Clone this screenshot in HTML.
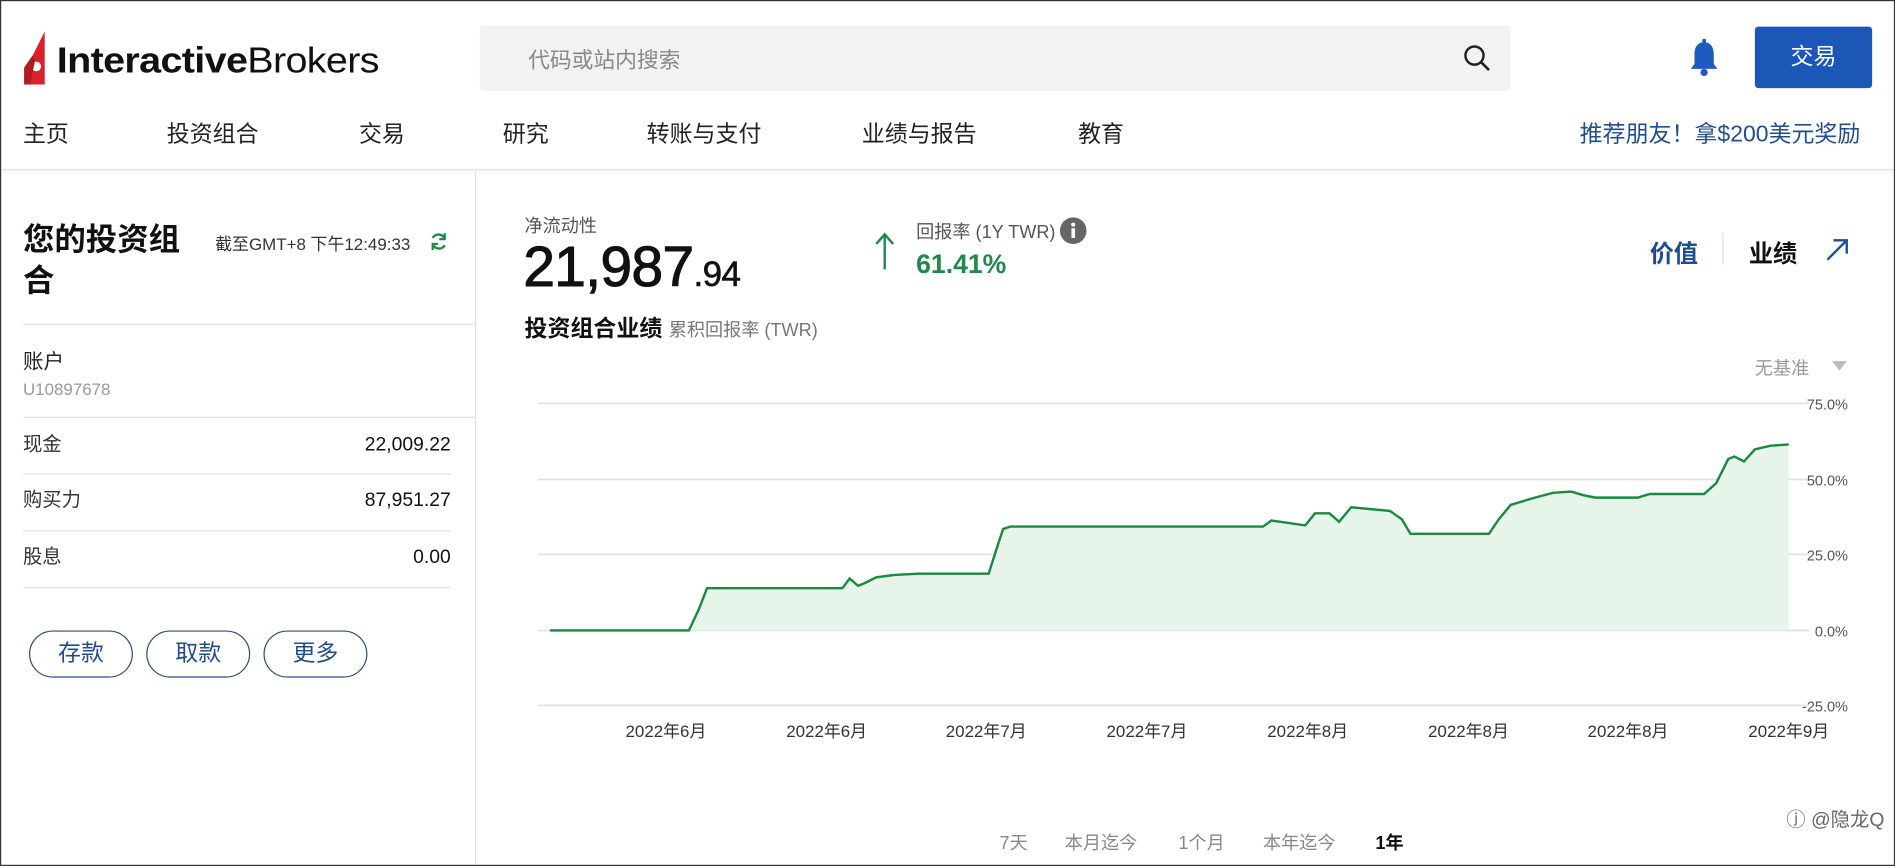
<!DOCTYPE html>
<html><head><meta charset="utf-8"><style>
html,body{margin:0;padding:0;width:1895px;height:866px;overflow:hidden;background:#fff}
#w{position:absolute;left:0;top:0;width:1568px;height:717px;transform:scale(1.2086,1.2078);transform-origin:0 0;font-family:"Liberation Sans","Noto Sans CJK SC",sans-serif;color:#222}
.a{position:absolute;white-space:nowrap}
.nav{top:96px;font-size:19px;color:#222}
.hr{position:absolute;height:1px;background:#e2e2e2}
.lab{font-size:16px;color:#333;line-height:22px}
.val{font-size:16px;color:#111;text-align:right;right:1195px;line-height:22px}
.btn{position:absolute;top:522px;width:86px;height:39px;border:1px solid #2a4d7a;border-radius:20px;color:#1f4d8f;font-size:19px;text-align:center;line-height:37px;box-sizing:border-box}
.tb{top:687px;font-size:15px;color:#888}
</style></head><body><div id="w">
<div style="position:absolute;left:0;top:0;width:1566px;height:715px;border:1px solid #333"></div>
<svg class="a" style="left:17px;top:26px" width="24" height="45" viewBox="0 0 24 45"><path d="M20 0 L10 20 L3 30 L3 44 L20 44 Z" fill="#d8232a"/><circle cx="13" cy="29" r="4" fill="#fff"/><path d="M3 30 L10 20 L12 24 L8 44 L3 44Z" fill="#b01b20"/></svg>
<div class="a" style="left:47px;top:34px;font-size:30px;letter-spacing:-0.5px;color:#111;transform:scaleX(1.09);transform-origin:0 0"><b>Interactive</b>Brokers</div>
<div class="a" style="left:397px;top:21px;width:853px;height:54px;background:#f2f2f2;border-radius:3px"></div>
<div class="a" style="left:437px;top:36px;font-size:18px;color:#888">代码或站内搜索</div>
<svg class="a" style="left:1210px;top:36px" width="24" height="24" viewBox="0 0 24 24"><circle cx="10" cy="10" r="7.5" fill="none" stroke="#222" stroke-width="2"/><path d="M15.5 15.5 L22 22" stroke="#222" stroke-width="2.2"/></svg>
<svg class="a" style="left:1396px;top:32px" width="28" height="32" viewBox="0 0 28 32"><path d="M14 3 C8 3 6 8 6 13 L6 21 L3 25 L25 25 L22 21 L22 13 C22 8 20 3 14 3Z" fill="#1f5bbf"/><circle cx="14" cy="28" r="3" fill="#1f5bbf"/><rect x="12.5" y="0" width="3" height="4" rx="1.5" fill="#1f5bbf"/></svg>
<div class="a" style="left:1452px;top:22px;width:97px;height:51px;background:#1c57b8;border-radius:3px;color:#fff;font-size:19px;text-align:center;line-height:51px">交易</div>
<div class="a nav" style="left:19px">主页</div>
<div class="a nav" style="left:138px">投资组合</div>
<div class="a nav" style="left:297px">交易</div>
<div class="a nav" style="left:416px">研究</div>
<div class="a nav" style="left:535px">转账与支付</div>
<div class="a nav" style="left:713px">业绩与报告</div>
<div class="a nav" style="left:892px">教育</div>
<div class="a nav" style="left:1307px;color:#1f4d8f">推荐朋友！拿$200美元奖励</div>
<div class="a" style="left:1px;top:140px;width:1566px;height:1px;background:#ddd;box-shadow:0 2px 4px rgba(0,0,0,.12)"></div>
<div class="a" style="left:393px;top:141px;width:1px;height:575px;background:#e0e0e0"></div>
<div class="a" style="left:19px;top:181px;font-size:26px;font-weight:bold;line-height:34px;color:#111;white-space:normal;width:145px">您的投资组合</div>
<div class="a" style="left:178px;top:192px;font-size:14px;color:#333">截至GMT+8 下午12:49:33</div>
<svg class="a" style="left:355px;top:192px" width="16" height="16" viewBox="0 0 16 16"><path d="M13 6 A5.5 5.5 0 0 0 3 5 M3 10 A5.5 5.5 0 0 0 13 11" fill="none" stroke="#1f8a4c" stroke-width="2"/><path d="M13 1 L13 6 L8.5 6" fill="none" stroke="#1f8a4c" stroke-width="1.8"/><path d="M3 15 L3 10 L7.5 10" fill="none" stroke="#1f8a4c" stroke-width="1.8"/></svg>
<div class="hr" style="left:19px;top:268px;width:374px"></div>
<div class="a" style="left:19px;top:285px;font-size:17px;color:#222">账户</div>
<div class="a" style="left:19px;top:314px;font-size:14px;color:#999">U10897678</div>
<div class="hr" style="left:19px;top:345px;width:374px"></div>
<div class="a lab" style="left:19px;top:358px">现金</div><div class="a val" style="top:358px">22,009.22</div>
<div class="hr" style="left:19px;top:392px;width:354px"></div>
<div class="a lab" style="left:19px;top:404px">购买力</div><div class="a val" style="top:404px">87,951.27</div>
<div class="hr" style="left:19px;top:439px;width:354px"></div>
<div class="a lab" style="left:19px;top:451px">股息</div><div class="a val" style="top:451px">0.00</div>
<div class="hr" style="left:19px;top:486px;width:354px"></div>
<div class="btn" style="left:24px">存款</div>
<div class="btn" style="left:121px">取款</div>
<div class="btn" style="left:218px">更多</div>
<div class="a" style="left:434px;top:176px;font-size:15px;color:#555">净流动性</div>
<div class="a" style="left:433px;top:193px;font-size:47px;color:#111;-webkit-text-stroke:0.9px #111;letter-spacing:-0.5px">21,987<span style="font-size:29px;-webkit-text-stroke:0.5px #111">.94</span></div>
<svg class="a" style="left:723px;top:192px" width="18" height="32" viewBox="0 0 18 32"><path d="M9 31 L9 3 M2 10 L9 2 L16 10" fill="none" stroke="#1f8a4c" stroke-width="2"/></svg>
<div class="a" style="left:758px;top:181px;font-size:15px;color:#555">回报率 (1Y TWR)</div>
<svg class="a" style="left:876px;top:179px" width="24" height="24" viewBox="0 0 24 24"><circle cx="12" cy="12" r="11" fill="#666"/><circle cx="12" cy="7" r="1.7" fill="#fff"/><rect x="10.5" y="10" width="3" height="8" fill="#fff"/></svg>
<div class="a" style="left:758px;top:206px;font-size:22px;font-weight:bold;color:#1f8a4c">61.41%</div>
<div class="a" style="left:1365px;top:194px;font-size:20px;font-weight:bold;color:#1f4d8f">价值</div>
<div class="a" style="left:1425px;top:193px;width:1px;height:26px;background:#ddd"></div>
<div class="a" style="left:1447px;top:194px;font-size:20px;font-weight:bold;color:#111">业绩</div>
<svg class="a" style="left:1509px;top:196px" width="22" height="22" viewBox="0 0 22 22"><path d="M3 19 L19 3 M8 3 L19 3 L19 14" fill="none" stroke="#1f4d8f" stroke-width="2"/></svg>
<div class="a" style="left:434px;top:257px;font-size:19px;font-weight:bold;color:#111">投资组合业绩 <span style="font-size:15px;font-weight:normal;color:#777">累积回报率 (TWR)</span></div>
<div class="a" style="left:1452px;top:294px;font-size:15px;color:#999">无基准</div>
<svg class="a" style="left:1515px;top:298px" width="14" height="10" viewBox="0 0 14 10"><path d="M1 1 L13 1 L7 9Z" fill="#bbb"/></svg>
<svg class="a" style="left:0;top:0" width="1568" height="717" viewBox="0 0 1568 717">
<g stroke="#e2e2e2" stroke-width="1.5"><line x1="445" y1="334" x2="1497" y2="334"/><line x1="445" y1="397" x2="1497" y2="397"/><line x1="445" y1="459" x2="1497" y2="459"/><line x1="445" y1="522" x2="1497" y2="522"/><line x1="445" y1="584" x2="1497" y2="584"/></g>
<path d="M455,522 L570,522 L578,505 L585,487 L697,487 L703,479 L710,485 L715,483 L725,478 L740,476 L760,475 L818,475 L826,450 L830,438 L836,436 L1045,436 L1052,431 L1080,435 L1088,425 L1100,425 L1108,432 L1118,420 L1150,423 L1160,430 L1167,442 L1232,442 L1240,430 L1250,418 L1270,412 L1285,408 L1300,407 L1310,410 L1320,412 L1355,412 L1365,409 L1410,409 L1420,400 L1430,380 L1435,378 L1443,382 L1452,372 L1465,369 L1480,368 L1480,522 Z" fill="#e6f4ea"/>
<path d="M455,522 L570,522 L578,505 L585,487 L697,487 L703,479 L710,485 L715,483 L725,478 L740,476 L760,475 L818,475 L826,450 L830,438 L836,436 L1045,436 L1052,431 L1080,435 L1088,425 L1100,425 L1108,432 L1118,420 L1150,423 L1160,430 L1167,442 L1232,442 L1240,430 L1250,418 L1270,412 L1285,408 L1300,407 L1310,410 L1320,412 L1355,412 L1365,409 L1410,409 L1420,400 L1430,380 L1435,378 L1443,382 L1452,372 L1465,369 L1480,368" fill="none" stroke="#1a8a3f" stroke-width="2"/>
<g font-family="Liberation Sans, Noto Sans CJK SC, sans-serif" font-size="12" fill="#555" text-anchor="end"><text x="1529" y="339">75.0%</text><text x="1529" y="402">50.0%</text><text x="1529" y="464">25.0%</text><text x="1529" y="527">0.0%</text><text x="1529" y="589">-25.0%</text></g>
<g font-family="Liberation Sans, Noto Sans CJK SC, sans-serif" font-size="14" fill="#333" text-anchor="middle"><text x="551" y="610">2022年6月</text><text x="684" y="610">2022年6月</text><text x="816" y="610">2022年7月</text><text x="949" y="610">2022年7月</text><text x="1082" y="610">2022年8月</text><text x="1215" y="610">2022年8月</text><text x="1347" y="610">2022年8月</text><text x="1480" y="610">2022年9月</text></g>
</svg>
<div class="a tb" style="left:827px">7天</div>
<div class="a tb" style="left:881px">本月迄今</div>
<div class="a tb" style="left:975px">1个月</div>
<div class="a tb" style="left:1045px">本年迄今</div>
<div class="a tb" style="left:1138px;color:#111;font-weight:bold">1年</div>
<div class="a" style="left:1478px;top:665px;font-size:16px;color:#666">ⓙ @隐龙Q</div>
</div></body></html>
